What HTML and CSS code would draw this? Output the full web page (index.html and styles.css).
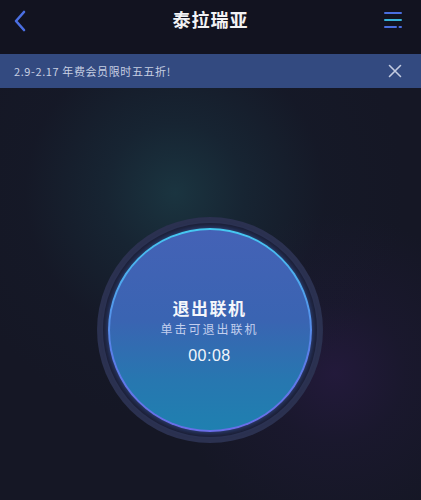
FILE: index.html
```html
<!DOCTYPE html>
<html lang="zh">
<head>
<meta charset="utf-8">
<link rel="stylesheet" href="styles.css">
</head>
<body>
<div class="app">
  <header class="topbar">
    <svg class="back" width="14" height="22" viewBox="0 0 14 22"><path d="M11 2 L3 11 L11 20" fill="none" stroke="#4b6fe2" stroke-width="2.6" stroke-linecap="round" stroke-linejoin="round"/></svg>
    <div class="title">泰拉瑞亚</div>
    <svg class="menu" width="20" height="20" viewBox="0 0 20 20">
      <rect x="1" y="2" width="18" height="2" rx="1" fill="#4a6ee0"/>
      <rect x="1" y="9" width="18" height="2" rx="1" fill="#38b3d8"/>
      <rect x="1" y="16" width="13" height="2" rx="1" fill="#4a6ee0"/>
      <rect x="15.5" y="16" width="3.5" height="2" rx="1" fill="#4a6ee0"/>
    </svg>
  </header>
  <div class="banner">
    <span class="banner-text">2.9-2.17 年费会员限时五五折!</span>
    <svg class="close" width="14" height="14" viewBox="0 0 14 14"><path d="M1.5 1.5 L12.5 12.5 M12.5 1.5 L1.5 12.5" stroke="#c3cbe0" stroke-width="1.6" stroke-linecap="round"/></svg>
  </div>
  <main class="stage">
    <div class="ring">
      <div class="gap">
        <button class="core">
          <span class="core-title">退出联机</span>
          <span class="core-sub">单击可退出联机</span>
          <span class="core-time">00:08</span>
        </button>
      </div>
    </div>
  </main>
</div>
</body>
</html>
```
FILE: styles.css
```css
* { box-sizing: border-box; }
html, body { margin: 0; padding: 0; }
body {
  width: 421px;
  height: 500px;
  overflow: hidden;
  background: #151725;
  font-family: "Noto Sans CJK SC", "Noto Sans", sans-serif;
}
.app {
  display: flex;
  flex-direction: column;
  height: 500px;
}
.topbar {
  height: 54px;
  background: #121320;
  display: flex;
  align-items: flex-start;
  justify-content: space-between;
  padding: 9px 18px 0 13px;
  position: relative;
}
.back { margin-top: 1px; }
.title {
  position: absolute;
  left: 0; right: 0; top: 6px;
  text-align: center;
  color: #f2f2f4;
  font-size: 18px;
  font-weight: 700;
  letter-spacing: 1px;
  line-height: 26px;
}
.menu { margin-top: 1px; }
.banner {
  height: 34px;
  background: #334a80;
  display: flex;
  align-items: center;
  justify-content: space-between;
  padding: 0 19px 0 14px;
}
.banner-text {
  color: #c7cfe2;
  font-size: 11px;
  letter-spacing: 0.6px;
}
.stage {
  flex: 1;
  display: flex;
  justify-content: center;
  padding-top: 129px;
  background:
    radial-gradient(circle at 175px 105px, rgba(30, 72, 82, 0.6) 0, rgba(26, 58, 72, 0.38) 70px, rgba(22, 34, 50, 0.15) 150px, rgba(21, 23, 37, 0) 230px),
    radial-gradient(circle at 335px 285px, rgba(48, 28, 80, 0.5) 0, rgba(38, 26, 66, 0.28) 70px, rgba(21, 23, 37, 0) 160px),
    #151725;
}
.ring {
  width: 226px;
  height: 226px;
  border-radius: 50%;
  background: #2b3150;
  padding: 6px;
  margin-left: -2px;
}
.gap {
  width: 100%;
  height: 100%;
  border-radius: 50%;
  background: #1b1e34;
  padding: 5px;
}
.core {
  width: 100%;
  height: 100%;
  border-radius: 50%;
  border: 2px solid transparent;
  background:
    linear-gradient(180deg, #4462b6 0%, #3a64b2 45%, #2777b0 75%, #1f80b0 100%) padding-box,
    linear-gradient(180deg, #45c9f2 0%, #5a7fe8 60%, #6a6ee8 100%) border-box;
  box-shadow: 0 0 6px rgba(80, 130, 240, 0.5);
  display: flex;
  flex-direction: column;
  align-items: center;
  justify-content: flex-start;
  padding: 66px 0 0 0;
  font-family: "Noto Sans CJK SC", "Noto Sans", sans-serif;
  cursor: pointer;
}
.core-title {
  color: #f4f6fb;
  font-size: 17px;
  font-weight: 700;
  letter-spacing: 1.5px;
  line-height: 24px;
}
.core-sub {
  color: #c3cfee;
  font-size: 12px;
  letter-spacing: 2px;
  line-height: 18px;
}
.core-time {
  color: #f2f5fb;
  font-size: 16px;
  font-family: "Liberation Sans", Arial, sans-serif;
  letter-spacing: 0.5px;
  line-height: 22px;
  margin-top: 7px;
}
```
